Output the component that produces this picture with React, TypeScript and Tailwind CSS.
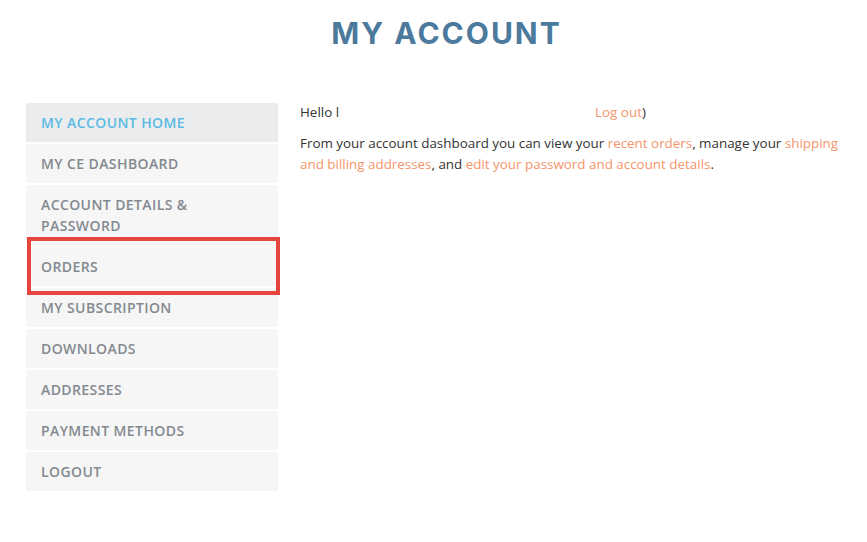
import React from "react";

const items = [
  "MY ACCOUNT HOME",
  "MY CE DASHBOARD",
  "ACCOUNT DETAILS & PASSWORD",
  "ORDERS",
  "MY SUBSCRIPTION",
  "DOWNLOADS",
  "ADDRESSES",
  "PAYMENT METHODS",
  "LOGOUT",
];

export default function App() {
  return (
    <div className="w-[867px] h-[542px] bg-white overflow-hidden" style={{ fontFamily: '"Open Sans", sans-serif' }}>
      <div className="pl-[26px]">
        <h1
          className="text-center text-[30px] font-bold tracking-[2px] text-[#4b7a9c] leading-[36px] pt-[15px]"
          style={{ fontFamily: "Inter, sans-serif" }}
        >
          MY ACCOUNT
        </h1>
        <div className="flex mt-[52px]">
          <nav className="w-[252px] flex flex-col gap-[2px] shrink-0">
            {items.map((label, i) => (
              <div key={label} className="relative">
                <div
                  className={
                    i === 0
                      ? "bg-[#ebecee] text-[#5cbbe2] text-[14px] font-semibold leading-[21px] tracking-[0.4px] pl-[15px] pr-[40px] py-[9px]"
                      : "bg-[#f6f6f6] text-[#838990] text-[14px] font-semibold leading-[21px] tracking-[0.4px] pl-[15px] pr-[40px] py-[9px]"
                  }
                >
                  {label}
                </div>
                {label === "ORDERS" && (
                  <div className="absolute z-10 left-[1px] top-[-10px] w-[253px] h-[58px] border-[4px] border-[#e5453d] pointer-events-none" />
                )}
              </div>
            ))}
          </nav>
          <div className="ml-[22px] pr-[24px] text-[13.4px] leading-[21px] text-[#333333] -mt-[1px]">
            <p>
              Hello l<span className="inline-block w-[256px]"></span>
              <a className="text-[#f4956a]">Log out</a>)
            </p>
            <p className="mt-[10px]">
              From your account dashboard you can view your{" "}
              <a className="text-[#f4956a]">recent orders</a>, manage your{" "}
              <a className="text-[#f4956a]">shipping and billing addresses</a>, and{" "}
              <a className="text-[#f4956a]">edit your password and account details</a>.
            </p>
          </div>
        </div>
      </div>
    </div>
  );
}
